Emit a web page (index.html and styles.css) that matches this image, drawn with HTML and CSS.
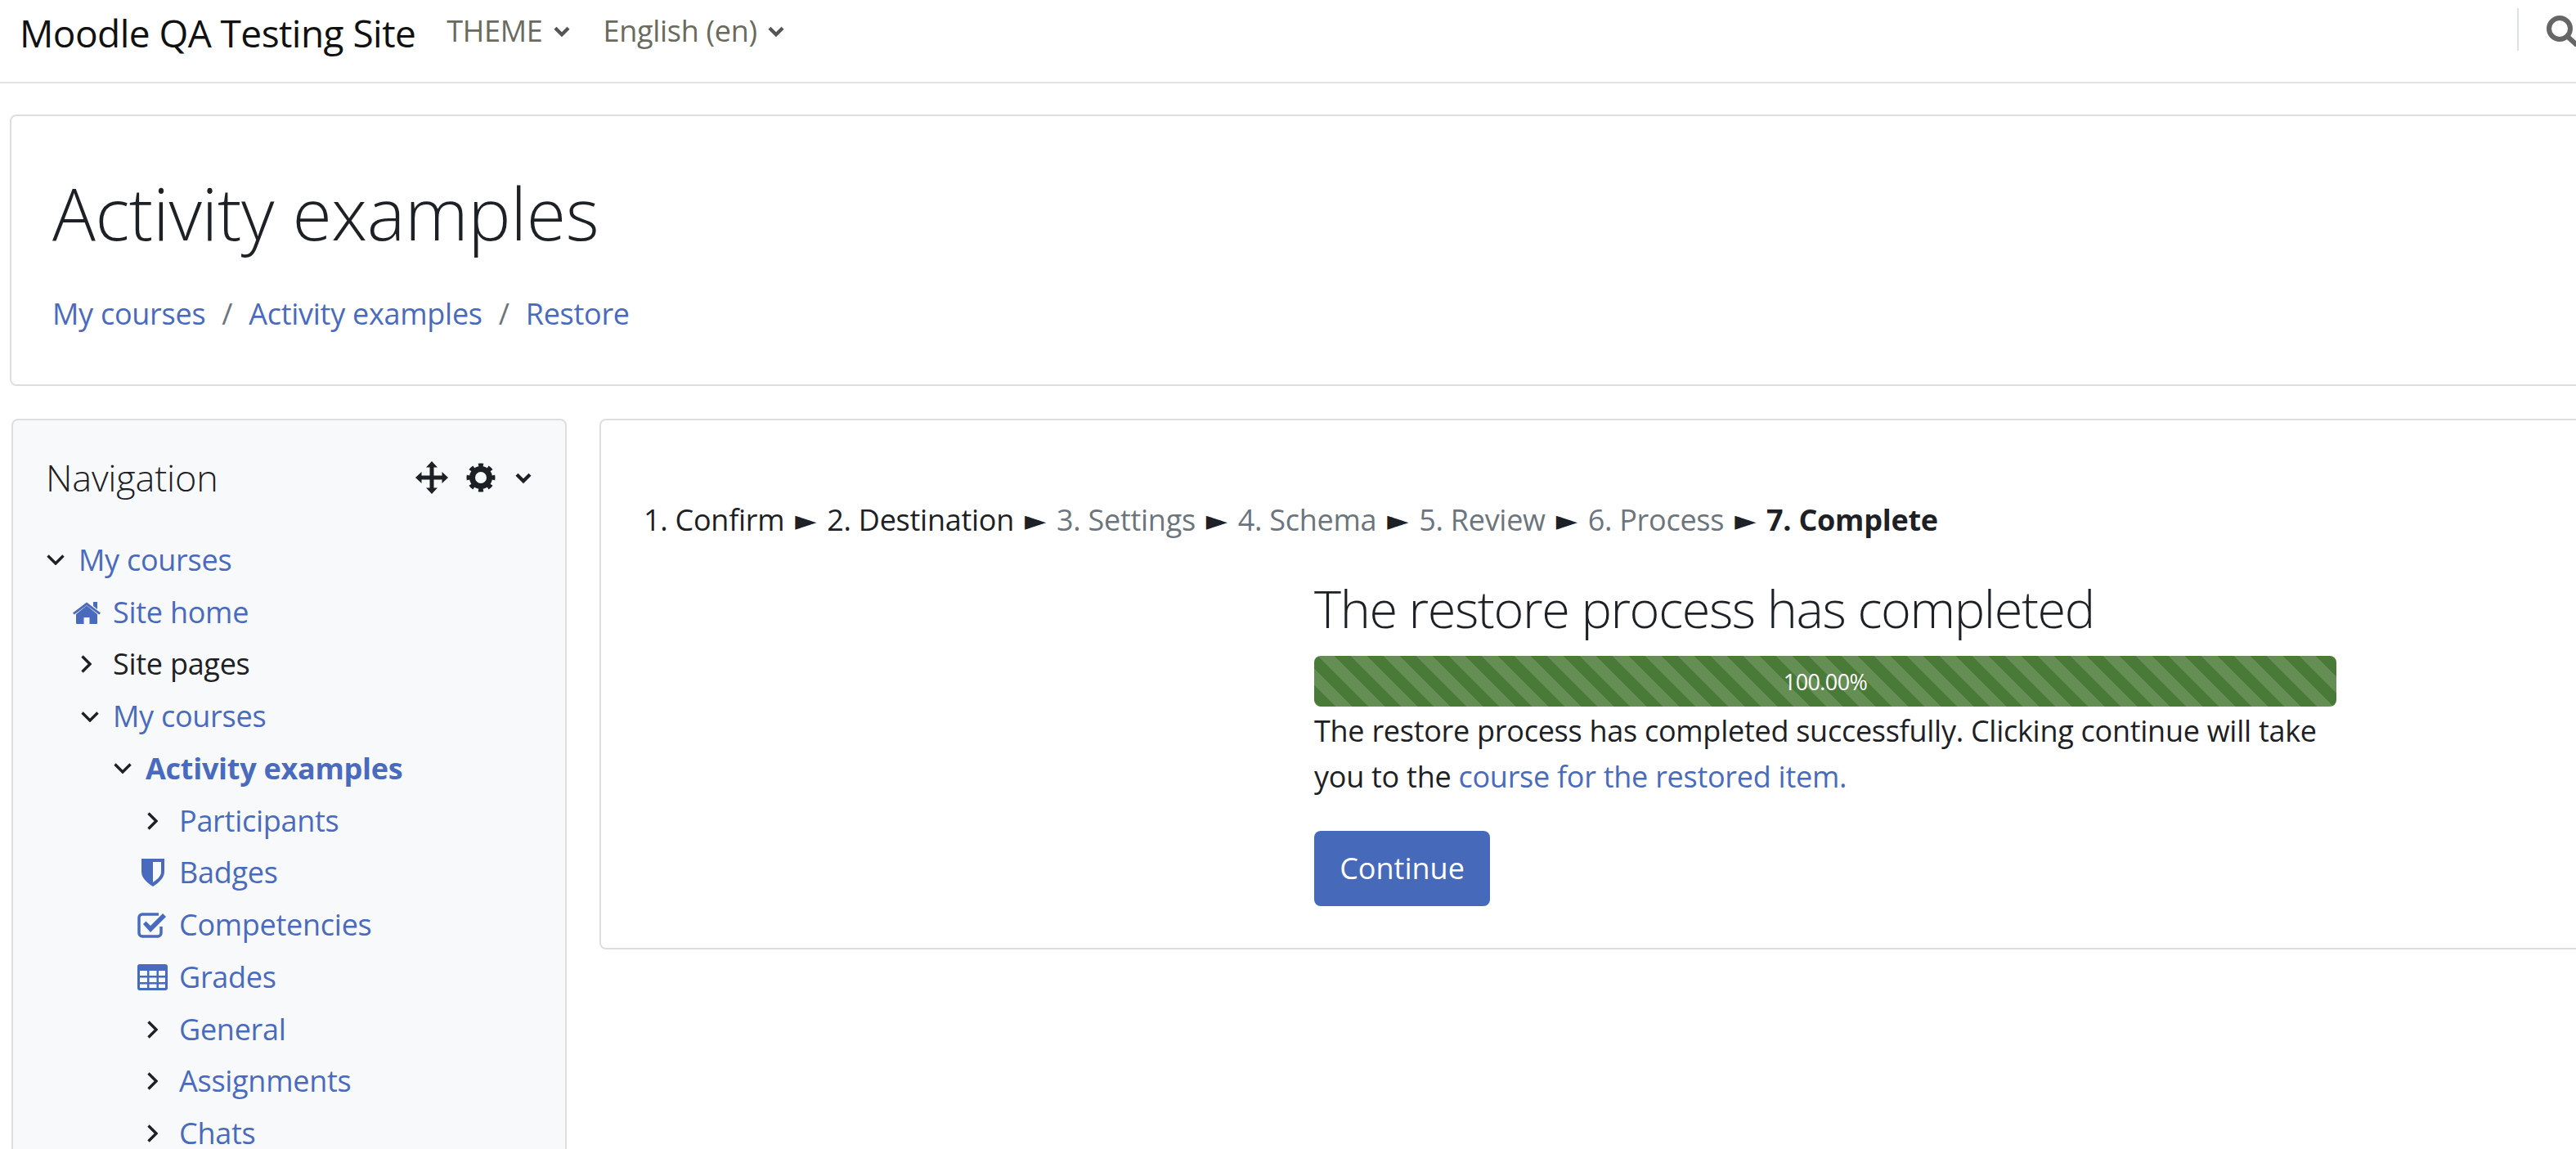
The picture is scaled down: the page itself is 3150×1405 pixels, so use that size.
FILE: index.html
```html
<!DOCTYPE html>
<html lang="en">
<head>
<meta charset="utf-8">
<title>Activity examples: Restore</title>
<link rel="stylesheet" href="styles.css">
</head>
<body>
<div class="page">
  <nav class="navbar">
    <a class="brand">Moodle QA Testing Site</a>
    <a class="menu">THEME<svg class="caret" viewBox="0 0 20 14"><path d="M2.5 3l7.5 7.5L17.500 3"/></svg></a>
    <a class="menu">English (en)<svg class="caret" viewBox="0 0 20 14"><path d="M2.5 3l7.5 7.500L17.500 3"/></svg></a>
    <div class="nav-right">
      <span class="divider"></span>
      <svg class="search" viewBox="0 0 40 38"><circle cx="16" cy="16" r="13"/><path d="M26 26l12 11"/></svg>
    </div>
  </nav>
  <header class="card page-header">
    <h1>Activity examples</h1>
    <ol class="crumbs">
      <li><a>My courses</a></li>
      <li class="sep">/</li>
      <li><a>Activity examples</a></li>
      <li class="sep">/</li>
      <li><a>Restore</a></li>
    </ol>
  </header>
  <div class="columns">
    <aside class="card block">
      <div class="block-head">
        <h5>Navigation</h5>
        <svg class="move" viewBox="0 0 40 40"><path d="M20 0l7 7.500h-4.500V17.500H32.500V13l7.500 7-7.500 7v-4.500H22.500V32.500H27L20 40l-7-7.500h4.500V22.500H7.500V27L0 20l7.500-7v4.500H17.500V7.500H13z"/></svg>
        <svg class="gear" viewBox="0 0 36 36"><circle class="gear-body" cx="18" cy="18" r="10.500"/><circle class="gear-teeth" cx="18" cy="18" r="15" pathLength="80" stroke-dasharray="5 5" stroke-dashoffset="2.500"/></svg>
        <svg class="head-caret" viewBox="0 0 20 14"><path d="M2.500 3l7.500 7.500L17.500 3"/></svg>
      </div>
      <ul class="tree">
        <li class="row"><svg class="down" viewBox="0 0 22 13"><path d="M1.500 1.500l9.500 9.500 9.500-9.500"/></svg><a>My courses</a></li>
        <li>
          <ul class="tree sub">
            <li class="row"><svg class="home" viewBox="0 0 36 28"><path d="M18 5.500L5 16v11a1 1 0 0 0 1 1h8.500v-8h7v8H30a1 1 0 0 0 1-1V16z"/><path d="M1 14.500L18 1.500l17 13-1.800 2L18 5.200 2.800 16.500z"/><path d="M26 1h5v9l-5-4z"/></svg><a>Site home</a></li>
            <li class="row"><svg class="right" viewBox="0 0 13 22"><path d="M1.500 1.500l9.500 9.500-9.500 9.500"/></svg><span>Site pages</span></li>
            <li class="row"><svg class="down" viewBox="0 0 22 13"><path d="M1.500 1.500l9.500 9.500 9.500-9.500"/></svg><a>My courses</a></li>
            <li>
              <ul class="tree sub">
                <li class="row"><svg class="down" viewBox="0 0 22 13"><path d="M1.500 1.500l9.500 9.500 9.500-9.500"/></svg><a class="current">Activity examples</a></li>
                <li>
                  <ul class="tree sub">
                    <li class="row"><svg class="right" viewBox="0 0 13 22"><path d="M1.500 1.500l9.500 9.500-9.500 9.500"/></svg><a>Participants</a></li>
                    <li class="row"><svg class="badge" viewBox="0 0 28 34"><path fill-rule="evenodd" d="M0 0h28v16c0 8-8 14-14 18C8 30 0 24 0 16zM14 4v25c4-3 10-7 10-13V4z"/></svg><a>Badges</a></li>
                    <li class="row"><svg class="check" viewBox="0 0 37 31"><path class="stroke" d="M29 17v8a4 4 0 0 1-4 4H6a4 4 0 0 1-4-4V6a4 4 0 0 1 4-4h20"/><path d="M7 14l3.500-3.500 5.500 5.500L31 1l4 4-19 19z"/></svg><a>Competencies</a></li>
                    <li class="row"><svg class="grid" viewBox="0 0 37 32"><path fill-rule="evenodd" d="M3 0h31a3 3 0 0 1 3 3v26a3 3 0 0 1-3 3H3a3 3 0 0 1-3-3V3a3 3 0 0 1 3-3zM3 8v6h9V8zm11.500 0v6h9V8zM26 8v6h8V8zM3 16.500v5.500h9v-5.500zm11.500 0v5.500h9v-5.500zm11.500 0v5.500h8v-5.500zM3 24.500V29h9v-4.500zm11.500 0V29h9v-4.500zm11.500 0V29h8v-4.500z"/></svg><a>Grades</a></li>
                    <li class="row"><svg class="right" viewBox="0 0 13 22"><path d="M1.500 1.500l9.500 9.500-9.500 9.500"/></svg><a>General</a></li>
                    <li class="row"><svg class="right" viewBox="0 0 13 22"><path d="M1.500 1.500l9.500 9.500-9.500 9.500"/></svg><a>Assignments</a></li>
                    <li class="row"><svg class="right" viewBox="0 0 13 22"><path d="M1.500 1.500l9.500 9.500-9.500 9.500"/></svg><a>Chats</a></li>
                  </ul>
                </li>
              </ul>
            </li>
          </ul>
        </li>
      </ul>
    </aside>
    <main class="card content">
      <div class="steps">
        <span>1. Confirm</span><span class="arrow">►</span><span>2. Destination</span><span class="arrow">►</span><span class="todo">3. Settings</span><span class="arrow">►</span><span class="todo">4. Schema</span><span class="arrow">►</span><span class="todo">5. Review</span><span class="arrow">►</span><span class="todo">6. Process</span><span class="arrow">►</span><strong>7. Complete</strong>
      </div>
      <section class="progress-box">
        <h2>The restore process has completed</h2>
        <div class="bar">100.00%</div>
        <p>The restore process has completed successfully. Clicking continue will take you to the <a>course for the restored item.</a></p>
        <button class="btn" type="button">Continue</button>
      </section>
    </main>
  </div>
</div>
</body>
</html>
```
FILE: styles.css
```css
html, body {
  margin: 0;
  height: 1405px;
  overflow: hidden;
  background: #fff;
}
body {
  font-family: "Open Sans", "Noto Sans", sans-serif;
  font-size: 36px;
  line-height: 56px;
  letter-spacing: -0.27px;
  color: #1d2125;
}
a { color: #4a6bbd; text-decoration: none; }
.page { width: 3744px; }

.navbar {
  width: 3150px;
  height: 100px;
  display: flex;
  align-items: flex-start;
  border-bottom: 2px solid #e0e2e6;
  background: #fff;
}
.brand { color: #111; font-size: 46px; margin: 12px 38px 0 24px; line-height: 56px; letter-spacing: -0.55px; }
.menu { color: #6a6a5e; line-height: 56px; margin: 10px 40px 0 0; display: flex; align-items: center; letter-spacing: -0.3px; }
.caret { width: 22px; height: 15px; margin-left: 12px; }
.caret path, .head-caret path { fill: none; stroke: #555; stroke-width: 4; }
.nav-right { margin-left: auto; display: flex; align-items: flex-start; margin-right: -4px; }
.divider { width: 2px; height: 52px; margin: 10px 34px 0 0; background: #dee2e6; }
.search { width: 40px; height: 38px; margin-top: 19px; }
.search circle, .search path { fill: none; stroke: #666; stroke-width: 6; }

.card {
  border: 2px solid #dedede;
  border-radius: 8px;
  box-sizing: border-box;
  background: #fff;
}
.page-header {
  margin: 38px 0 0 12px;
  height: 332px;
  padding: 58px 50px 0;
}
h1 { margin: 0; font-weight: 300; font-size: 88px; line-height: 120px; letter-spacing: -0.4px; color: #1d2125; }
.crumbs { list-style: none; margin: 36px 0 0; padding: 0; display: flex; }
.sep { color: #6c757d; margin: 0 20px; }

.columns { display: flex; align-items: flex-start; margin: 40px 0 0 14px; gap: 40px; }
.block {
  width: 679px;
  flex: none;
  height: 1100px;
  background: #f8f9fa;
  padding: 34px 40px 0;
}
.block-head { display: flex; align-items: center; height: 72px; }
h5 { margin: 0; font-weight: 300; font-size: 45px; line-height: 72px; margin-right: auto; letter-spacing: -0.2px; color: #1d2125; }
.move { width: 40px; height: 40px; margin-right: 22px; }
.move path { fill: #1d2125; }
.gear { width: 36px; height: 36px; margin-right: 23px; }
.gear-body { fill: none; stroke: #1d2125; stroke-width: 7; }
.gear-teeth { fill: none; stroke: #1d2125; stroke-width: 5; }
.head-caret { width: 22px; height: 15px; }
.head-caret path { stroke: #1d2125; }

.tree { list-style: none; margin: 0; padding: 0; }
.block-head + .tree { margin-top: 33px; }
.sub { padding-left: 42px; }
.sub .sub { padding-left: 40px; }
.sub .sub .sub { padding-left: 41px; }
.row { height: 63.75px; display: flex; align-items: center; }
.row svg { flex: none; }
.row svg path { fill: #4a6bbd; }
.down { width: 22px; height: 13px; margin: 0 17px 0 1px; }
.right { width: 13px; height: 22px; margin: 0 26px 0 1px; }
.row .down path, .row .right path { fill: none; stroke: #1d2125; stroke-width: 3.4; }
.home { width: 36px; height: 28px; margin: 0 14px 0 -10px; }
.badge { width: 28px; height: 34px; margin: 0 18px 0 -6px; }
.check { width: 37px; height: 31px; margin: 0 14px 0 -11px; }
.row .check .stroke { fill: none; stroke: #4a6bbd; stroke-width: 3.500; }
.grid { width: 37px; height: 32px; margin: 0 14px 0 -11px; }
.current { font-weight: 700; }

.content { width: 2998px; flex: none; height: 649px; padding: 94px 52px 0; }
.steps { display: flex; gap: 13px; }
.steps strong { font-weight: 700; }
.arrow { font-family: "DejaVu Sans", sans-serif; font-size: 34px; }
.todo { color: #6c757d; }
.progress-box { width: 1250px; margin: 38px auto 0; }
h2 { margin: 0; font-weight: 300; font-size: 63px; line-height: 84px; letter-spacing: -1.4px; color: #1d2125; }
.bar {
  margin-top: 16px;
  height: 62px;
  border-radius: 8px;
  background-color: #4a7a37;
  background-image: linear-gradient(45deg, rgba(255,255,255,.15) 25%, transparent 25%, transparent 50%, rgba(255,255,255,.15) 50%, rgba(255,255,255,.15) 75%, transparent 75%, transparent);
  background-size: 40px 40px;
  background-position: 5px 0;
  color: #fff;
  text-align: center;
  font-size: 27px;
  line-height: 64px;
  letter-spacing: -0.6px;
}
p { margin: 2px 0 0; }
.btn {
  margin-top: 38px;
  width: 215px;
  height: 92px;
  border: 0;
  border-radius: 8px;
  background: #4669ba;
  color: #fff;
  font: inherit;
}
```
